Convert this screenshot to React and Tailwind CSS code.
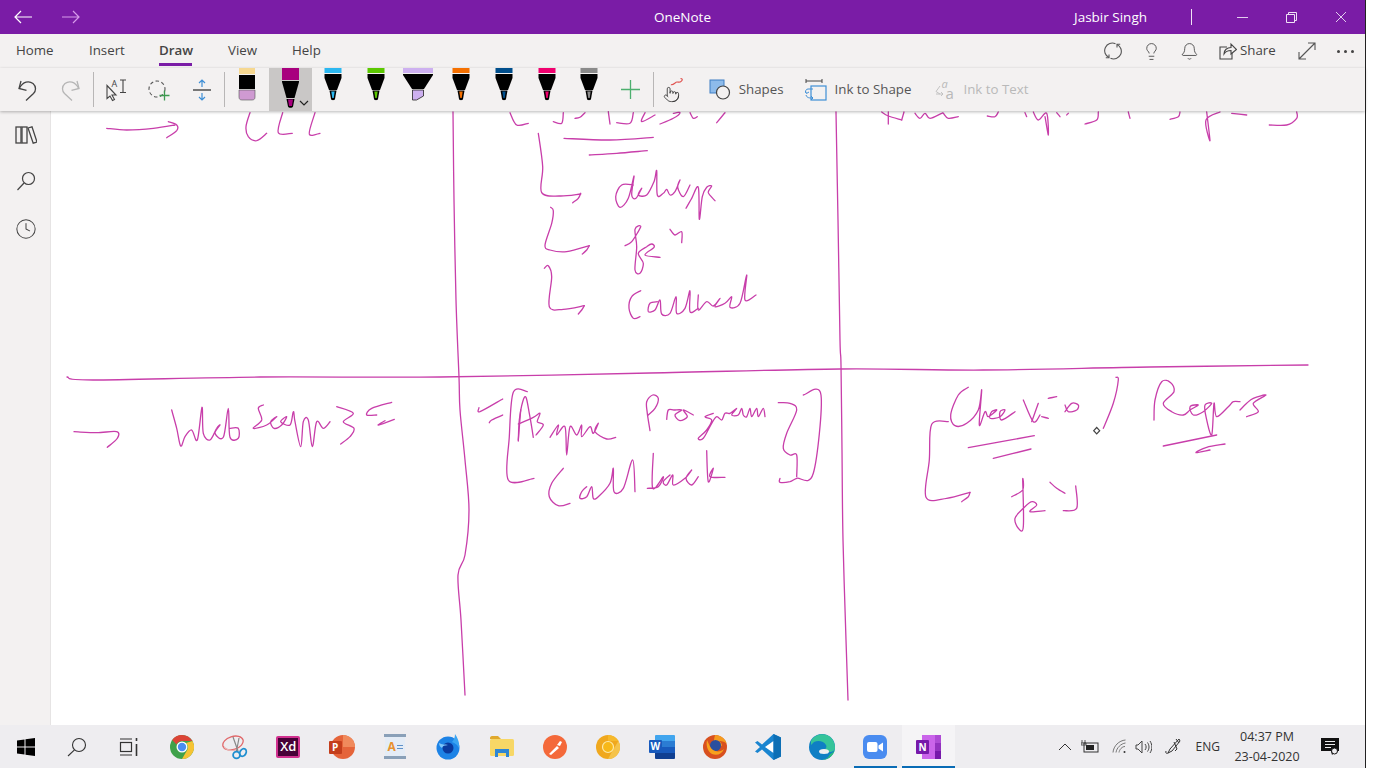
import { Bell, Clock, Lightbulb, Pointer } from 'lucide-react';

const INK_COLOR = '#c83eaa';

// the page grid, in page coordinates
const GRID_LINES = [
  [453, 112, 454, 200, 456, 300, 459, 377, 460, 410, 465, 460, 469, 510, 465, 555, 458, 575, 461, 620, 465, 695],
  [836, 112, 838, 220, 840, 340, 841, 365, 842, 450, 843, 540, 846, 640, 848, 700],
  [67, 377, 93, 380, 260, 377, 440, 377, 650, 373, 840, 369, 983, 370, 1150, 367, 1308, 365],
];

// ink strokes, traced in 3x crop coordinates: [originX, originY, x, y, x, y, ...]
const STROKES = [
  // first column, top
  [60, 100, 140, 85, 200, 90, 280, 85, 345, 75],
  [60, 100, 325, 65, 350, 75, 350, 92, 320, 113],
  [60, 100, 570, 38, 558, 80, 565, 110, 590, 122, 620, 100],
  [60, 100, 668, 38, 655, 98, 697, 100],
  [60, 100, 765, 38, 748, 102, 780, 100],
  // web scraping
  [60, 100, 42, 995, 110, 998, 170, 995, 172, 1015, 142, 1042],
  [60, 100, 335, 930, 350, 985, 362, 1038, 375, 1010, 395, 990, 412, 1020, 426, 922, 430, 1000, 450, 1020, 470, 985, 480, 975, 465, 1000, 490, 1012, 505, 925, 510, 1012, 535, 1015, 535, 985, 510, 985],
  [60, 100, 610, 915, 595, 925, 605, 960, 580, 985, 620, 975, 650, 950, 632, 965, 642, 985, 665, 975, 680, 950, 662, 965, 690, 975, 700, 935, 705, 965, 722, 1040, 730, 965, 745, 960, 757, 1040, 770, 965, 790, 985, 810, 965],
  [60, 100, 830, 920, 880, 940, 850, 965, 882, 985, 870, 1010, 842, 1032],
  [60, 100, 995, 907, 935, 925, 920, 945, 950, 945],
  [60, 100, 1003, 958, 955, 975, 975, 962],
  // middle column, clipped text
  [460, 0, 150, 338, 170, 375, 205, 370],
  [460, 0, 280, 365, 305, 370, 310, 338],
  [460, 0, 375, 338, 360, 352, 345, 355],
  [460, 0, 445, 335, 450, 372],
  [460, 0, 470, 368, 510, 370, 520, 338],
  [460, 0, 555, 338, 545, 365, 585, 345],
  [460, 0, 600, 372, 640, 355, 660, 338, 640, 340],
  [460, 0, 690, 338, 700, 355, 712, 350],
  [460, 0, 795, 338, 770, 368],
  // middle column, list
  [450, 100, 342, 115, 480, 120, 610, 112],
  [450, 100, 592, 152, 500, 160, 418, 165],
  [450, 100, 265, 100, 278, 200, 275, 278, 330, 288, 392, 282],
  [450, 100, 392, 280, 385, 295, 368, 308],
  [450, 100, 550, 255, 515, 255, 497, 290, 510, 322, 535, 295, 552, 228, 545, 285, 558, 295, 575, 265, 565, 285, 590, 285, 612, 245, 620, 212, 622, 285, 640, 280, 650, 268, 660, 285, 675, 275, 690, 240, 683, 262, 700, 290, 720, 255],
  [450, 100, 708, 325, 725, 295, 745, 262, 748, 358, 757, 290, 770, 262, 785, 258, 775, 278, 795, 302],
  [450, 100, 302, 322, 310, 332, 305, 370, 285, 435, 300, 450, 350, 455, 418, 437],
  [450, 100, 418, 437, 410, 450, 397, 462],
  [450, 100, 525, 437, 545, 425, 572, 380, 555, 388, 560, 440, 555, 510, 570, 520, 580, 490, 565, 460, 590, 440, 605, 432, 612, 442, 585, 465, 630, 472],
  [450, 100, 660, 388, 675, 405, 695, 395, 695, 428],
  [450, 100, 283, 505, 295, 497, 305, 530, 298, 620, 340, 628, 403, 617],
  [450, 100, 403, 617, 395, 630, 385, 642],
  [450, 100, 572, 572, 545, 590, 537, 625, 550, 655, 570, 650],
  [450, 100, 622, 605, 600, 610, 595, 635, 615, 630, 630, 600, 635, 642, 660, 640, 678, 590, 680, 640, 705, 625, 720, 572, 720, 635, 745, 625],
  [450, 100, 745, 585, 745, 630, 770, 605, 790, 618, 810, 595, 795, 620, 825, 610, 845, 590, 840, 622, 870, 610, 890, 525, 885, 600, 918, 585],
  // async program
  [450, 360, 158, 117, 90, 155, 87, 143],
  [450, 360, 158, 165, 125, 180, 118, 188],
  [450, 360, 232, 95, 190, 97, 178, 230, 175, 360, 252, 355],
  [450, 360, 205, 243, 208, 180, 218, 125, 228, 112, 238, 160, 250, 232],
  [450, 360, 212, 150, 205, 240],
  [450, 360, 205, 192, 250, 172, 270, 160, 262, 185, 280, 195, 258, 225],
  [450, 360, 300, 232, 325, 195, 320, 225, 345, 200, 350, 285, 360, 200, 380, 225, 395, 195, 395, 230, 420, 200, 430, 220, 445, 190, 435, 215, 470, 237, 497, 232],
  [450, 360, 600, 212, 592, 160, 590, 125, 608, 105, 625, 115, 615, 145, 595, 165],
  [450, 360, 650, 178, 655, 150, 672, 150, 695, 150, 675, 165, 690, 182, 712, 170, 700, 150, 730, 165],
  [450, 360, 790, 160, 765, 170, 785, 180, 770, 210, 745, 235, 760, 235, 785, 190, 800, 170, 815, 180, 825, 160, 840, 160, 860, 145, 845, 165, 865, 165, 875, 145, 880, 165, 890, 170, 900, 145, 905, 170, 920, 145, 925, 170, 940, 145, 945, 170],
  [450, 360, 340, 325, 305, 370, 298, 410, 325, 437, 360, 430],
  [450, 360, 410, 380, 395, 395, 390, 415, 410, 410, 425, 380, 430, 415, 445, 410, 480, 370, 490, 325, 492, 395, 520, 385, 548, 300, 555, 395],
  [450, 360, 610, 280, 608, 385, 640, 350, 625, 380, 592, 385],
  [450, 360, 660, 345, 640, 365, 650, 375, 668, 345, 670, 375, 705, 355, 725, 330, 708, 355, 725, 375, 745, 350],
  [450, 360, 770, 272, 775, 365, 790, 325, 780, 350, 825, 352],
  [450, 360, 1060, 105, 1113, 105, 1090, 340, 1040, 355, 1020, 365, 990, 367, 990, 355],
  [450, 360, 985, 128, 1020, 130, 1040, 150, 1010, 220, 1000, 265, 1020, 285, 1040, 285, 1040, 350],
  // right column, clipped text
  [830, 100, 155, 36, 175, 48, 215, 60],
  [830, 100, 175, 36, 175, 72],
  [830, 100, 222, 36, 215, 60],
  [830, 100, 255, 40, 270, 55, 285, 40, 300, 55, 335, 40, 340, 40, 355, 55, 385, 50],
  [830, 100, 505, 36, 495, 50, 472, 48],
  [830, 100, 585, 38, 590, 50],
  [830, 100, 610, 36, 625, 60, 650, 40, 655, 105, 645, 50],
  [830, 100, 680, 38, 690, 50],
  [830, 100, 710, 45, 715, 40],
  [830, 100, 805, 36, 800, 60, 765, 72],
  [830, 100, 895, 36, 900, 55],
  [830, 100, 1050, 36, 1045, 50, 1020, 58],
  [830, 100, 1130, 36, 1140, 122, 1128, 60, 1170, 36],
  [830, 100, 1205, 40, 1250, 45],
  [830, 100, 1400, 36, 1400, 55, 1370, 75, 1318, 75],
  // cheerio / request
  [900, 360, 205, 82, 175, 105, 152, 165, 165, 197, 200, 190, 235, 150, 245, 90, 238, 195, 255, 155, 265, 170, 290, 150, 275, 155, 270, 175, 300, 170, 315, 150, 300, 155, 305, 180, 345, 155],
  [900, 360, 370, 120, 400, 185, 420, 165],
  [900, 360, 415, 130, 395, 185],
  [900, 360, 425, 170, 445, 175],
  [900, 360, 445, 115, 470, 110],
  [900, 360, 495, 135, 505, 155, 530, 150, 535, 135, 515, 130, 495, 155],
  [900, 360, 145, 185, 95, 193, 88, 300, 78, 412, 140, 415, 210, 397],
  [900, 360, 210, 397, 205, 410, 185, 425],
  [900, 360, 403, 227, 205, 263],
  [900, 360, 393, 267, 280, 295],
  [900, 360, 648, 52, 655, 60, 640, 130, 610, 205],
  [900, 360, 762, 180, 765, 120, 785, 65, 812, 68, 822, 95, 790, 130, 815, 155, 850, 165, 870, 150, 895, 135, 870, 140, 880, 165, 910, 155, 935, 130, 915, 135, 918, 170, 935, 225, 942, 130, 950, 170, 985, 140, 1000, 125, 1020, 125],
  [900, 360, 1020, 150, 1040, 130, 1060, 115, 1098, 105, 1060, 130, 1075, 155, 1040, 170],
  [900, 360, 790, 258, 950, 225],
  [900, 360, 975, 252, 920, 262, 888, 278, 930, 270],
  [900, 360, 335, 410, 368, 390, 368, 360, 370, 500, 355, 505, 345, 475, 370, 445, 395, 425, 410, 435, 390, 455, 435, 452],
  [900, 360, 450, 367, 470, 385, 495, 400],
  [900, 360, 527, 378, 530, 445, 490, 452],
];

// catmull-rom through the points
function smoothPath(pts) {
  let d = `M${pts[0][0].toFixed(1)} ${pts[0][1].toFixed(1)}`;
  for (let i = 0; i < pts.length - 1; i++) {
    const p0 = pts[i - 1] || pts[i];
    const p1 = pts[i];
    const p2 = pts[i + 1];
    const p3 = pts[i + 2] || p2;
    const c1 = [p1[0] + (p2[0] - p0[0]) / 6, p1[1] + (p2[1] - p0[1]) / 6];
    const c2 = [p2[0] - (p3[0] - p1[0]) / 6, p2[1] - (p3[1] - p1[1]) / 6];
    d += `C${c1[0].toFixed(1)} ${c1[1].toFixed(1)} ${c2[0].toFixed(1)} ${c2[1].toFixed(1)} ${p2[0].toFixed(1)} ${p2[1].toFixed(1)}`;
  }
  return d;
}

function toPoints(flat, ox = 0, oy = 0, scale = 1) {
  const pts = [];
  for (let i = 0; i < flat.length; i += 2) {
    pts.push([ox + flat[i] / scale, oy + flat[i + 1] / scale]);
  }
  return pts;
}

const INK_PATHS = [
  ...GRID_LINES.map(line => smoothPath(toPoints(line))),
  ...STROKES.map(([ox, oy, ...flat]) => smoothPath(toPoints(flat, ox, oy, 3))),
];

function InkCanvas() {
  return (
    <div className="flex-1 bg-white overflow-hidden">
      <svg className="w-[1314px] h-[614px]" viewBox="51 111 1314 614" fill="none">
        {INK_PATHS.map((d, i) => (
          <path key={i} d={d} stroke={INK_COLOR} strokeWidth="1.300" strokeLinecap="round" strokeLinejoin="round" />
        ))}
        <path d="M1096.7 427.5l3 3.2-3 3.2-3-3.2z" stroke="#444" strokeWidth="1.2" />
      </svg>
    </div>
  );
}

function Pen({ color }) {
  return (
    <svg width="20" height="34" viewBox="0 0 20 34">
      <rect x="1.5" y="0" width="17" height="5" fill={color} />
      <path d="M1.5 6h17v4L14 22h-8L1.5 10z" fill="#000" />
      <path d="M6.5 22.5h7L12 31c-.4 1.6-3.600 1.600-4 0z" fill="#000" />
      <path d="M8.300 23.500h3.400l-1 6.500h-1.400z" fill={color} />
    </svg>
  );
}

function SelectedPen() {
  return (
    <svg width="20" height="43" viewBox="0 0 20 43">
      <rect x="2" y="0" width="17" height="12" fill="#a8007e" />
      <path d="M2 13h17v1l-4.500 16h-8L2 14z" fill="#000" />
      <path d="M6.500 31h8L13 38.500c-.4 1.800-4.600 1.800-5 0z" fill="#000" />
      <path d="M8 31.500h5l-1 6.500H9z" fill="#a8007e" />
    </svg>
  );
}

function Eraser() {
  return (
    <svg width="20" height="34" viewBox="0 0 20 34">
      <rect x="2" y="0" width="16" height="6" fill="#f6d891" />
      <rect x="2" y="7" width="16" height="14" fill="#000" />
      <path d="M2 22h16v7c0 2-1 3-3 3H5c-2 0-3-1-3-3z" fill="#cf9ad2" stroke="#555" strokeWidth=".6" />
    </svg>
  );
}

function Highlighter() {
  return (
    <svg width="32" height="34" viewBox="0 0 32 34">
      <rect x="1" y="0" width="30" height="5" fill="#cdb0f0" />
      <path d="M1 6h30v1L22 21H10L1 7z" fill="#000" />
      <path d="M10.500 22h11v6l-7 4h-4z" fill="#cdb0f0" stroke="#222" strokeWidth=".8" />
    </svg>
  );
}

function Divider() {
  return <div className="w-[1px] h-[35px] bg-[#b8b6b6] shrink-0" />;
}

function ToolSlot({ children, w = 'w-[43px]' }) {
  return <div className={`${w} h-full flex items-center justify-center shrink-0`}>{children}</div>;
}

function Undo({ color = '#444', flip = false }) {
  return (
    <svg width="24" height="24" viewBox="0 0 24 24" fill="none" stroke={color} strokeWidth="1.300" className={flip ? '-scale-x-100' : ''}>
      <path d="M6 3L4 10.500l7.500 1.800" />
      <path d="M4.500 10C8 3.500 14 2.500 18 5.500c3.500 3 3 7.500.5 10L11 22.500" />
    </svg>
  );
}

function SelectIcon() {
  return (
    <div className="relative w-[24px] h-[24px]">
      <svg className="absolute inset-0" width="24" height="24" viewBox="0 0 24 24" fill="none" stroke="#444" strokeWidth="1.100">
        <path d="M3 7.500v13l3-2.500 2.500 4.500 2-1-2.500-4.500 4 0z" />
        <path d="M16 2h6M19 2v12.500M16 14.500h6" />
      </svg>
      <span className="absolute left-[8px] top-[1px] text-[9px] leading-none text-[#444]">A</span>
    </div>
  );
}

function LassoIcon() {
  return (
    <svg width="24" height="24" viewBox="0 0 24 24" fill="none">
      <circle cx="10" cy="11" r="8" stroke="#555" strokeWidth="1.100" strokeDasharray="3.500 2.500" />
      <path d="M17.500 12.500v10M12.500 17.500h10" stroke="#3d9a50" strokeWidth="1.300" />
    </svg>
  );
}

function SpaceIcon() {
  return (
    <svg width="20" height="24" viewBox="0 0 20 24" fill="none">
      <path d="M1 12h18" stroke="#777" strokeWidth="2" />
      <path d="M10 2v7M7 5l3-3 3 3M10 15v7M7 19l3 3 3-3" stroke="#3f8fd6" strokeWidth="1.200" />
    </svg>
  );
}

function HandIcon() {
  return (
    <div className="relative w-[24px] h-[26px]">
      <Pointer size={17} strokeWidth={1.2} className="absolute left-[3px] bottom-0 text-[#333]" />
      <svg className="absolute top-0 left-[10px]" width="14" height="10" viewBox="0 0 16 10" fill="none">
        <path d="M1 8c3 1 5-3 7-3s3 1 5-1 1-3-1-3" stroke="#e0524f" strokeWidth="1.300" />
      </svg>
    </div>
  );
}

function ShapesIcon() {
  return (
    <svg width="23" height="21" viewBox="0 0 23 21" fill="none">
      <rect x="1" y="1" width="14" height="13" fill="#8dbbeb" stroke="#3f7fc4" />
      <circle cx="14" cy="13.500" r="6.500" fill="#f3f1f1" stroke="#444" strokeWidth="1.200" />
    </svg>
  );
}

function InkShapeIcon() {
  return (
    <svg width="22" height="24" viewBox="0 0 22 24" fill="none">
      <path d="M1 3h16M1 1v4M17 1v4" stroke="#444" />
      <rect x="6" y="8" width="15" height="14" stroke="#3f8fd6" strokeWidth="1.200" fill="#f3f1f1" />
      <path d="M8 11H3c-2 0-3 2-2 4M0 13l1.500 2.500L4 14M1 17c1 3 3 3 7 3M6 18l2 2-2 2" stroke="#3f8fd6" strokeWidth="1" />
    </svg>
  );
}

function InkTextIcon() {
  return (
    <div className="relative w-[22px] h-[24px] text-[#b8b8b8]">
      <svg className="absolute inset-0" width="22" height="24" viewBox="0 0 22 24" fill="none">
        <path d="M6 8L2 13.500 6 16M2 16h7M7 14l2 2-2 2" stroke="#bdbdbd" strokeWidth=".9" />
      </svg>
      <span className="absolute left-[7px] top-[0px] text-[11px] italic leading-none">a</span>
      <span className="absolute left-[11px] top-[8px] text-[15px] leading-none">a</span>
    </div>
  );
}

function SyncIcon() {
  return (
    <svg width="18" height="18" viewBox="0 0 18 18" fill="none" stroke="#555" strokeWidth="1.100">
      <path d="M11.500 1.800A7.500 7.500 0 0 0 5 15.500" />
      <path d="M6.500 16.200A7.500 7.500 0 0 0 13 2.500" />
      <path d="M13 5.500V2.300h3.200M5 12.500v3.200H1.800" />
    </svg>
  );
}

function ShareIcon() {
  return (
    <svg width="18" height="18" viewBox="0 0 18 18" fill="none" stroke="#444" strokeWidth="1.100">
      <path d="M8 5H1v12h12v-6" />
      <path d="M5 12c0-4 3-6.500 7-6.500V2l5.500 5.500L12 12V8.500c-3 0-5.500 1-7 3.500z" />
    </svg>
  );
}

function ExpandIcon() {
  return (
    <svg width="18" height="18" viewBox="0 0 18 18" fill="none" stroke="#555" strokeWidth="1.100">
      <path d="M1 17L17 1M10 1h7v7M1 10v7h7" />
    </svg>
  );
}

function BooksIcon() {
  return (
    <svg width="22" height="18" viewBox="0 0 22 18" fill="none" stroke="#444" strokeWidth="1.300">
      <rect x="1" y="1" width="5" height="16" />
      <rect x="7" y="1" width="5" height="16" />
      <path d="M13 2l4-1.200 5 15.200-3.800 1.200z" />
    </svg>
  );
}

function SearchLeft() {
  return (
    <svg width="20" height="20" viewBox="0 0 20 20" fill="none" stroke="#444" strokeWidth="1.200">
      <circle cx="12.500" cy="7.500" r="6" />
      <path d="M8 12L1.500 19" />
    </svg>
  );
}

function WinLogo() {
  return (
    <svg width="18" height="18" viewBox="0 0 18 18" fill="#000">
      <path d="M0 2.600L7.500 1.500v7H0zM8.500 1.300L18 0v8.500H8.500zM0 9.500h7.500v7L0 15.400zM8.500 9.500H18V18l-9.500-1.300z" />
    </svg>
  );
}

function TaskView() {
  return (
    <svg width="20" height="20" viewBox="0 0 20 20" fill="none" stroke="#333" strokeWidth="1.200">
      <path d="M1 2h12M1 18h12" />
      <rect x="1.500" y="5.500" width="11" height="9" />
      <path d="M17.500 1v3M17.500 7v12" strokeWidth="1.600" />
    </svg>
  );
}

function ChromeLogo() {
  return (
    <svg width="24" height="24" viewBox="0 0 24 24">
      <circle cx="12" cy="12" r="12" fill="#3fa14a" />
      <path d="M12 0a12 12 0 0 1 10.400 6H12a6 6 0 0 0-5.500 3.500L2.200 5A12 12 0 0 1 12 0z" fill="#dc4437" />
      <path d="M22.400 6A12 12 0 0 1 12 24l5.200-9A6 6 0 0 0 16 8z" fill="#f6c333" />
      <circle cx="12" cy="12" r="5.500" fill="#fff" />
      <circle cx="12" cy="12" r="4.200" fill="#4b8df0" />
    </svg>
  );
}

function SnipLogo() {
  return (
    <svg width="26" height="26" viewBox="0 0 26 26" fill="none">
      <ellipse cx="11" cy="9" rx="10.500" ry="6.500" stroke="#e0686a" strokeWidth="1.300" transform="rotate(-18 11 9)" />
      <path d="M2 13c3 3 8 4 12 3" stroke="#e8b5b5" strokeWidth="1.200" />
      <path d="M11 3l5 14M17 4l-2.500 13" stroke="#888" strokeWidth="1.200" />
      <circle cx="14.500" cy="21" r="3.400" stroke="#1f8fd0" strokeWidth="1.800" />
      <ellipse cx="21" cy="18.500" rx="3" ry="4" stroke="#1f8fd0" strokeWidth="1.800" transform="rotate(30 21 18.500)" />
    </svg>
  );
}

function XdLogo() {
  return (
    <div className="w-[24px] h-[22px] rounded-[2px] bg-[#470137] border-2 border-[#d1318f] flex items-center justify-center text-white text-[13px] font-semibold leading-none">
      Xd
    </div>
  );
}

function PptLogo() {
  return (
    <div className="relative w-[26px] h-[24px]">
      <div className="absolute right-0 top-0 w-[24px] h-[24px] rounded-full bg-[#e5643a]" />
      <div className="absolute right-0 top-0 w-[12px] h-[12px] rounded-tr-full bg-[#f08a5c]" />
      <div className="absolute left-0 top-[6px] w-[13px] h-[13px] rounded-[1px] bg-[#c43e1c] flex items-center justify-center text-white text-[10px] font-bold leading-none">
        P
      </div>
    </div>
  );
}

function WordpadLogo() {
  return (
    <div className="w-[22px] h-[25px] flex flex-col">
      <div className="h-[3px] bg-[#8aa0b8]" />
      <div className="flex-1 mx-[1px] bg-[#e4ecf6] flex items-center justify-center gap-[1px]">
        <span className="text-[12px] font-bold leading-none text-[#e8912d]">A</span>
        <div className="w-[6px] flex flex-col gap-[2px]">
          <div className="h-[1px] bg-[#5f91c9]" />
          <div className="h-[1px] bg-[#5f91c9]" />
        </div>
      </div>
      <div className="h-[3px] bg-[#8aa0b8]" />
    </div>
  );
}

function FirefoxDevLogo() {
  return (
    <svg width="24" height="26" viewBox="0 0 24 26">
      <circle cx="12" cy="14" r="11.500" fill="#1d83e6" />
      <path d="M19 0c2 3 5 8 4 14-2-4-5-5-7-6 2-2 3-5 3-8z" fill="#3ba5f2" />
      <circle cx="12" cy="14" r="5.500" fill="#0a3a9e" />
      <path d="M3 9c3 2 6 1 9 2-3 1-5 0-6 3-2-1-3-3-3-5z" fill="#7cc4fa" />
    </svg>
  );
}

function FolderLogo() {
  return (
    <svg width="24" height="22" viewBox="0 0 24 22">
      <path d="M0 2c0-1 .7-2 2-2h6l3 3h-11z" fill="#e0a92e" />
      <rect x="0" y="3" width="24" height="17" rx="1.500" fill="#f7d766" />
      <rect x="5" y="13" width="14" height="4" fill="#2e86d4" />
      <rect x="5" y="17" width="3" height="4" fill="#2e86d4" />
      <rect x="16" y="17" width="3" height="4" fill="#2e86d4" />
    </svg>
  );
}

function PostmanLogo() {
  return (
    <svg width="24" height="24" viewBox="0 0 24 24">
      <circle cx="12" cy="12" r="12" fill="#f4693a" />
      <path d="M6 19l8-8 2 2-8 7zM14 10l3-4 2 1-2 4z" fill="#fff" />
    </svg>
  );
}

function CanaryLogo() {
  return (
    <svg width="24" height="24" viewBox="0 0 24 24" fill="none">
      <circle cx="12" cy="12" r="12" fill="#f0a81e" />
      <path d="M12 0a12 12 0 0 1 10.400 6H12z" fill="#f6b92c" />
      <path d="M22.400 6A12 12 0 0 1 12 24l5-9z" fill="#f5c34a" />
      <circle cx="12" cy="12" r="5.500" fill="#f7b818" stroke="#fde9a8" strokeWidth="1.200" />
    </svg>
  );
}

function WordLogo() {
  return (
    <div className="relative w-[26px] h-[24px]">
      <div className="absolute right-0 top-0 w-[20px] h-[24px] rounded-[1px] overflow-hidden flex flex-col">
        <div className="flex-1 bg-[#41a5ee]" />
        <div className="flex-1 bg-[#2b7cd3]" />
        <div className="flex-1 bg-[#185abd]" />
        <div className="flex-1 bg-[#103f91]" />
      </div>
      <div className="absolute left-0 top-[5px] w-[13px] h-[13px] bg-[#185abd] rounded-[1px] flex items-center justify-center text-white text-[10px] font-bold leading-none">
        W
      </div>
    </div>
  );
}

function FirefoxLogo() {
  return (
    <svg width="24" height="24" viewBox="0 0 24 24">
      <circle cx="12" cy="12" r="12" fill="#d8501f" />
      <path d="M12 0c5 0 10 3 12 9-3-3-6-3-8-3 2 1 3 3 3 5-3-1-6 0-8 1-1-3 0-8 1-12z" fill="#f59b1f" />
      <circle cx="12.500" cy="10.500" r="5.500" fill="#2a4f9e" />
      <path d="M4 5c-1 5 0 11 5 14 5 2 10 0 12-5-3 3-8 3-11 1S6 9 4 5z" fill="#f7a11c" />
    </svg>
  );
}

function VsCodeLogo() {
  return (
    <svg width="26" height="26" viewBox="0 0 26 26">
      <path d="M18.500 0L26 3.500v19L18.500 26 7 15.500l-4.500 3.500L0 17.500 5 13 0 8.500 2.500 7 7 10.500z" fill="#1a85d0" />
      <path d="M18.500 7L10 13l8.500 6z" fill="#fff" />
      <path d="M18.500 0L26 3.500v19L18.500 26z" fill="#0d6fb5" />
    </svg>
  );
}

function EdgeLogo() {
  return (
    <svg width="26" height="26" viewBox="0 0 26 26">
      <circle cx="13" cy="13" r="13" fill="#0f7fc4" />
      <path d="M2 7C5 1 12-1 18 1c5 2 8 7 8 13 0 2-2 4-6 4-3 0-5-1-5-2 2-1 3-3 2-5-2-4-8-5-12-3-1 1-2 2-3 3z" fill="#35c49a" />
      <path d="M26 14c0 6-6 12-13 12 5-1 7-3 8-6 3-1 5-3 5-6z" fill="#2bbd7a" />
      <ellipse cx="15" cy="17.500" rx="5" ry="2.500" fill="#eeedf0" />
    </svg>
  );
}

function ZoomLogo() {
  return (
    <div className="w-[24px] h-[24px] rounded-[6px] bg-[#4a8cf0] flex items-center justify-center">
      <svg width="16" height="10" viewBox="0 0 16 10" fill="#fff">
        <rect x="0" y="0" width="10.500" height="10" rx="2" />
        <path d="M11.500 3.500L16 .5v9l-4.500-3z" />
      </svg>
    </div>
  );
}

function OneNoteLogo() {
  return (
    <div className="relative w-[25px] h-[24px]">
      <div className="absolute right-0 top-0 w-[19px] h-[24px] flex">
        <div className="flex-1 bg-[#ca64ea]" />
        <div className="w-[6px] flex flex-col">
          <div className="flex-1 bg-[#ae4bd5]" />
          <div className="flex-1 bg-[#9332bf]" />
          <div className="flex-1 bg-[#7719aa]" />
        </div>
      </div>
      <div className="absolute left-0 top-[5px] w-[13px] h-[14px] bg-[#7719aa] rounded-[1px] flex items-center justify-center text-white text-[10px] font-bold leading-none">
        N
      </div>
    </div>
  );
}

const TASK_APPS = [
  { id: 'chrome', icon: <ChromeLogo /> },
  { id: 'snip', icon: <SnipLogo /> },
  { id: 'xd', icon: <XdLogo /> },
  { id: 'ppt', icon: <PptLogo /> },
  { id: 'wordpad', icon: <WordpadLogo /> },
  { id: 'firefoxdev', icon: <FirefoxDevLogo /> },
  { id: 'folder', icon: <FolderLogo /> },
  { id: 'postman', icon: <PostmanLogo /> },
  { id: 'canary', icon: <CanaryLogo /> },
  { id: 'word', icon: <WordLogo /> },
  { id: 'firefox', icon: <FirefoxLogo /> },
  { id: 'vscode', icon: <VsCodeLogo /> },
  { id: 'edge', icon: <EdgeLogo /> },
  { id: 'zoom', icon: <ZoomLogo />, underline: 'w-[43px]' },
  { id: 'onenote', icon: <OneNoteLogo />, underline: 'w-full', active: true },
];

function Taskbar() {
  return (
    <div className="h-[43px] bg-[#eeedf0] flex items-stretch shrink-0">
      <div className="w-[51px] flex items-center justify-center"><WinLogo /></div>
      <div className="w-[52px] flex items-center justify-center">
        <svg width="20" height="20" viewBox="0 0 20 20" fill="none" stroke="#333" strokeWidth="1.100">
          <circle cx="12" cy="8" r="6.500" />
          <path d="M7.500 12.800L1 19" />
        </svg>
      </div>
      <div className="w-[52px] flex items-center justify-center"><TaskView /></div>
      {TASK_APPS.map(app => (
        <div
          key={app.id}
          className={`relative w-[53.350px] flex items-center justify-center ${app.active ? 'bg-[#f5f4f6]' : ''}`}
        >
          {app.icon}
          {app.underline && <div className={`absolute bottom-0 h-[2px] bg-[#0a6cb5] ${app.underline}`} />}
        </div>
      ))}
      <div className="flex-1 flex items-center justify-end">
        <svg width="14" height="8" viewBox="0 0 14 8" fill="none" stroke="#333" className="mr-[9px]">
          <path d="M1 7l6-6 6 6" />
        </svg>
        <svg width="18" height="13" viewBox="0 0 18 13" fill="none" className="mr-[13px]">
          <rect x="3" y="3" width="14" height="9" stroke="#333" />
          <rect x="5" y="5" width="8" height="5" fill="#222" />
          <path d="M1 0v3M4 0v3M0 3h5v2H0z" stroke="#333" strokeWidth=".8" />
        </svg>
        <svg width="15" height="15" viewBox="0 0 15 15" fill="none" stroke="#777" strokeWidth="1" className="mr-[8px]">
          <path d="M1 13.500C1.500 7 7 1.500 13.500 1M4 13.500C4.500 9 9 4.500 13.500 4M7 13.500c.5-3 3-6 6-6" />
          <circle cx="12.500" cy="13" r="1" fill="#333" stroke="none" />
        </svg>
        <svg width="17" height="14" viewBox="0 0 17 14" fill="none" stroke="#444" strokeWidth="1" className="mr-[13px]">
          <path d="M1 5v4h2l4 4V1L3 5zM10 4c1.500 2 1.500 4 0 6M12.500 2.500c2 3 2 6 0 9M15 1c2.500 4 2.500 8 0 12" />
        </svg>
        <svg width="16" height="17" viewBox="0 0 16 17" fill="none" stroke="#333" strokeWidth="1" className="mr-[15px]">
          <path d="M14 1L5 11l-2 4 4-2 8-10zM11 1l3 4M1 13c-1 3 2 3 3 1M9 4l3 7-2 2" />
        </svg>
        <span className="text-[12px] text-[#333] mr-[12px]">ENG</span>
        <div className="flex flex-col items-center text-[12.500px] leading-[20px] text-[#333] mr-[19px] w-[70px]">
          <span>04:37 PM</span>
          <span>23-04-2020</span>
        </div>
        <svg width="18" height="18" viewBox="0 0 18 18" className="mr-[26px]">
          <path d="M0 0h18v13h-3l-4 4-1-4H0z" fill="#111" />
          <path d="M4 3.500h10M4 6.500h10M4 9.500h6" stroke="#eee" strokeWidth="1" />
          <circle cx="13.500" cy="13" r="3" fill="#eeedf0" stroke="#111" />
        </svg>
      </div>
    </div>
  );
}

export default function App() {
  return (
    <div className="w-[1376px] h-[768px] bg-white overflow-hidden font-['Open_Sans',sans-serif]">
      <div className="w-[1366px] h-full flex flex-col border-r border-[#222]">
        {/* Title bar */}
        <div className="h-[34px] bg-[#7a1ca6] grid grid-cols-[1fr_auto_1fr] items-center shrink-0 text-white text-[13.500px]">
          <div className="flex items-center">
            <svg width="18" height="14" viewBox="0 0 18 14" fill="none" stroke="#fff" strokeWidth="1.200" className="ml-[14px]">
              <path d="M18 7H1M7 1L1 7l6 6" />
            </svg>
            <svg width="18" height="14" viewBox="0 0 18 14" fill="none" stroke="#d79bea" strokeWidth="1.200" className="ml-[30px]">
              <path d="M0 7h17M11 1l6 6-6 6" />
            </svg>
          </div>
          <span>OneNote</span>
          <div className="flex items-center justify-end">
            <span className="mr-[44px]">Jasbir Singh</span>
            <div className="w-[1px] h-[16px] bg-[#f0e4f5] mr-[26px]" />
            <div className="w-[49px] flex justify-center">
              <div className="w-[11px] h-[1px] bg-[#e3cdee]" />
            </div>
            <div className="w-[49px] flex justify-center">
              <svg width="11" height="11" viewBox="0 0 11 11" fill="none" stroke="#efe2f5">
                <path d="M.5 2.500h8v8h-8zM2.500 2.500v-2h8v8h-2" />
              </svg>
            </div>
            <div className="w-[49px] flex justify-center">
              <svg width="12" height="12" viewBox="0 0 12 12" fill="none" stroke="#e3cdee">
                <path d="M1 1l10 10M11 1L1 11" />
              </svg>
            </div>
          </div>
        </div>

        {/* Tabs */}
        <div className="h-[34px] bg-[#f3f1f1] flex items-center pl-4 text-[13.300px] text-[#444] shrink-0">
          <span className="w-[73px]">Home</span>
          <span className="w-[70px]">Insert</span>
          <div className="w-[69px] h-full relative flex items-center">
            <span className="font-semibold">Draw</span>
            <div className="absolute left-0 top-[29px] w-[33px] h-[3px] bg-[#7a1ca6]" />
          </div>
          <span className="w-[64px]">View</span>
          <span>Help</span>
          <div className="ml-auto flex items-center">
            <div className="w-[38px] flex justify-center"><SyncIcon /></div>
            <div className="w-[38px] flex justify-center"><Lightbulb size={19} strokeWidth={1.1} /></div>
            <div className="w-[38px] flex justify-center"><Bell size={19} strokeWidth={1.1} /></div>
            <div className="flex items-center gap-[3px] ml-[11px] w-[69px]">
              <ShareIcon />
              <span>Share</span>
            </div>
            <div className="w-[38px] flex justify-center"><ExpandIcon /></div>
            <div className="w-[38px] flex justify-center gap-[4px]">
              <span className="w-[3px] h-[3px] rounded-full bg-[#444]" />
              <span className="w-[3px] h-[3px] rounded-full bg-[#444]" />
              <span className="w-[3px] h-[3px] rounded-full bg-[#444]" />
            </div>
            <div className="w-[1px]" />
          </div>
        </div>

        {/* Draw tools */}
        <div className="h-[43px] bg-[#f3f1f1] flex items-center pl-[6px] shrink-0 relative z-10 shadow-[0_1px_3px_rgba(0,0,0,0.28)] text-[13.300px] text-[#555]">
          <ToolSlot w="w-[42px]"><Undo /></ToolSlot>
          <ToolSlot w="w-[45px]"><Undo color="#b5b5b5" flip /></ToolSlot>
          <Divider />
          <ToolSlot><SelectIcon /></ToolSlot>
          <ToolSlot><LassoIcon /></ToolSlot>
          <ToolSlot><SpaceIcon /></ToolSlot>
          <div className="w-[1px]" />
          <Divider />
          <div className="flex items-start h-full ml-[1px]">
            <div className="w-[42.750px] flex justify-center"><Eraser /></div>
            <div className="w-[42.750px] h-[43px] bg-[#c9c7c6] flex justify-center relative">
              <SelectedPen />
              <svg className="absolute right-[3px] bottom-[5px]" width="10" height="6" viewBox="0 0 10 6" fill="none" stroke="#222" strokeWidth="1.200">
                <path d="M1 1l4 4 4-4" />
              </svg>
            </div>
            <div className="w-[42.750px] flex justify-center"><Pen color="#2bb7f0" /></div>
            <div className="w-[42.750px] flex justify-center"><Pen color="#5bc800" /></div>
            <div className="w-[42.750px] flex justify-center"><Highlighter /></div>
            <div className="w-[42.750px] flex justify-center"><Pen color="#f57000" /></div>
            <div className="w-[42.750px] flex justify-center"><Pen color="#004e8c" /></div>
            <div className="w-[42.750px] flex justify-center"><Pen color="#f0006e" /></div>
            <div className="w-[42.750px] flex justify-center"><Pen color="#8a8a8a" /></div>
          </div>
          <div className="w-[40px] flex justify-center">
            <svg width="19" height="19" viewBox="0 0 19 19" fill="none" stroke="#4caf6e" strokeWidth="1.300">
              <path d="M9.500 0v19M0 9.500h19" />
            </svg>
          </div>
          <div className="w-[2px]" />
          <Divider />
          <ToolSlot w="w-[36px]"><HandIcon /></ToolSlot>
          <div className="flex items-center gap-[7px] ml-[19px]">
            <ShapesIcon />
            <span>Shapes</span>
          </div>
          <div className="flex items-center gap-[8px] ml-[21px]">
            <InkShapeIcon />
            <span>Ink to Shape</span>
          </div>
          <div className="flex items-center gap-[7px] ml-[23px] text-[#b9b9b9]">
            <InkTextIcon />
            <span>Ink to Text</span>
          </div>
        </div>

        {/* Sidebar + page */}
        <div className="flex-1 flex min-h-0">
          <div className="w-[51px] bg-[#f3f1f1] border-r border-[#e6e4e4] flex flex-col items-center pl-[1px] pt-[15px] gap-[27px] shrink-0">
            <BooksIcon />
            <SearchLeft />
            <Clock size={22} strokeWidth={1.100} className="text-[#444]" />
          </div>
          <InkCanvas />
        </div>

        <Taskbar />
      </div>
    </div>
  );
}
